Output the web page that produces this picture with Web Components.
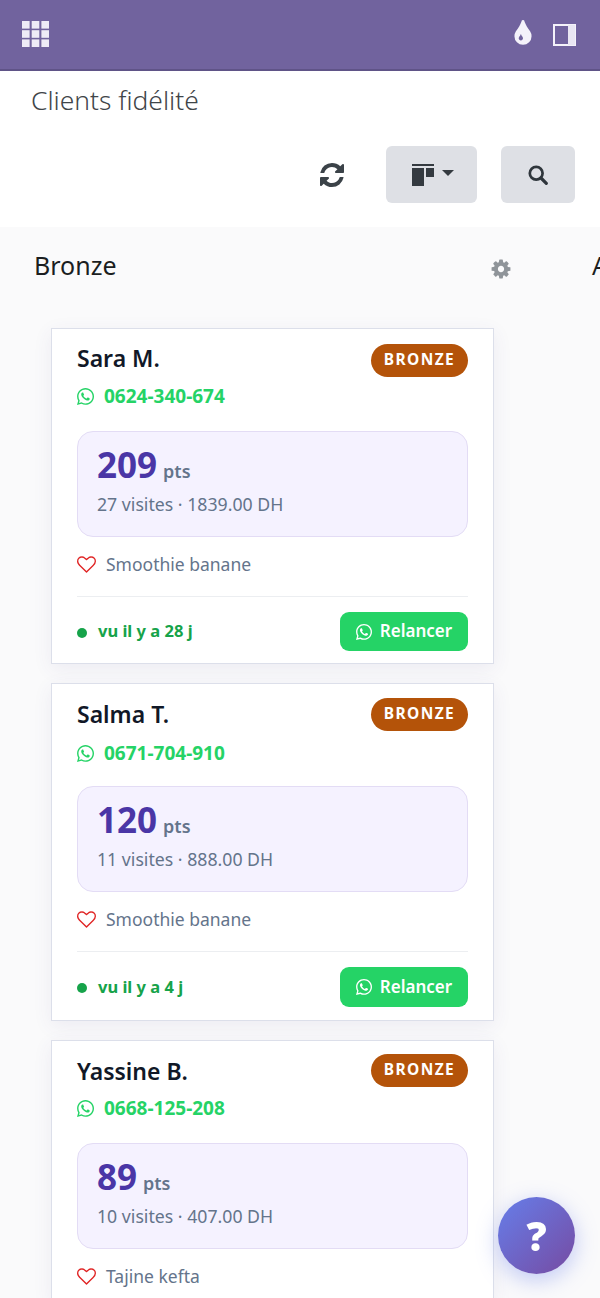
<!DOCTYPE html>
<html lang="fr">
<head>
<meta charset="utf-8">
<title>Clients fidélité</title>
<style>
  html, body {
    margin: 0;
    height: 100%;
    overflow: hidden;
    background: #fff;
    font-family: "Noto Sans", "Open Sans", sans-serif;
    color: #212529;
  }
  body { display: flex; flex-direction: column; }
</style>
</head>
<body>
<app-navbar></app-navbar>
<control-panel title="Clients fidélité"></control-panel>
<kanban-board>
  <kanban-column title="Bronze" settings>
    <loyalty-card name="Sara M." phone="0624-340-674" points="209" visits="27 visites · 1839.00 DH" favorite="Smoothie banane" seen="vu il y a 28 j"></loyalty-card>
    <loyalty-card tall style="--badge-y:-1px;--name-y:1px;--phone-y:2px" name="Salma T." phone="0671-704-910" points="120" visits="11 visites · 888.00 DH" favorite="Smoothie banane" seen="vu il y a 4 j"></loyalty-card>
    <loyalty-card style="--badge-y:-2px;--name-y:1px" name="Yassine B." phone="0668-125-208" points="89" visits="10 visites · 407.00 DH" favorite="Tajine kefta"></loyalty-card>
  </kanban-column>
  <kanban-column title="Argent"></kanban-column>
</kanban-board>
<help-fab></help-fab>

<script>
// Icones partagees (viewBox 1792 sauf WhatsApp)
const ICONS = {
  refresh: "M1639 1056q0 5-1 7-64 268-268 434.5t-478 166.5q-146 0-282.5-55t-243.5-157l-129 129q-19 19-45 19t-45-19-19-45v-448q0-26 19-45t45-19h448q26 0 45 19t19 45-19 45l-137 137q71 66 161 102t187 36q134 0 250-65t186-179q11-17 53-117 8-23 30-23h192q13 0 22.5 9.5t9.5 22.5zm25-800v448q0 26-19 45t-45 19h-448q-26 0-45-19t-19-45 19-45l138-138q-148-137-349-137-134 0-250 65t-186 179q-11 17-53 117-8 23-30 23h-199q-13 0-22.5-9.5t-9.5-22.5v-7q65-268 270-434.5t480-166.5q146 0 284 55.5t245 156.5l130-129q19-19 45-19t45 19 19 45z",
  cog: "M1152 896q0-106-75-181t-181-75-181 75-75 181 75 181 181 75 181-75 75-181zm512-109v222q0 12-8 23t-20 13l-185 28q-19 54-39 91 35 50 107 138 10 12 10 25t-9 23q-27 37-99 108t-94 71q-12 0-26-9l-138-108q-44 23-91 38-16 136-29 186-7 28-36 28h-222q-14 0-24.5-8.5t-11.5-21.5l-28-184q-49-16-90-37l-141 107q-10 9-25 9-14 0-25-11-126-114-165-168-7-10-7-23 0-12 8-23 15-21 51-66.5t54-70.5q-27-50-41-99l-183-27q-13-2-21-12.5t-8-23.5v-222q0-12 8-23t19-13l186-28q14-46 39-92-40-57-107-138-10-12-10-24 0-10 9-23 26-36 98.5-107.5t94.5-71.5q13 0 26 10l138 107q44-23 91-38 16-136 29-186 7-28 36-28h222q14 0 24.5 8.5t11.5 21.5l28 184q49 16 90 37l142-107q9-9 24-9 13 0 25 10 129 119 165 170 7 8 7 22 0 12-8 23-15 21-51 66.5t-54 70.5q26 50 41 98l183 28q13 2 21 12.5t8 23.5z",
  tint: "M896 1152q0-36-20-69-1-1-15.5-22.5t-25.5-38-25-44-21-50.5q-4-16-21-16t-21 16q-7 23-21 50.5t-25 44-25.5 38-15.5 22.5q-20 33-20 69 0 53 37.5 90.5t90.5 37.5 90.5-37.5 37.5-90.5zm512-128q0 212-150 362t-362 150-362-150-150-362q0-145 81-275 6-9 62.5-90.5t101-151 99.5-178 83-201.5q9-30 34-47t51-17 51.5 17 33.5 47q28 93 83 201.5t99.5 178 101 151 62.5 90.5q81 127 81 275z",
  heart: "M1664 596q0-81-21.5-143t-55-98.5-81.5-59.5-94-31-98-8-112 25.5-110.5 64-86.5 72-60 61.5q-18 22-49 22t-49-22q-24-28-60-61.5t-86.5-72-110.5-64-112-25.5-98 8-94 31-81.5 59.5-55 98.5-21.5 143q0 168 187 355l581 560 580-559q188-188 188-356zm128 0q0 221-229 450l-623 600q-18 18-44 18t-44-18l-624-601q-10-8-27.5-26t-55.5-65.5-68-97.5-53.5-121-23.5-138q0-220 127-344t351-124q62 0 126.5 21.5t120 58 95.5 68.5 76 68q36-36 76-68t95.5-68.5 120-58 126.5-21.5q224 0 351 124t127 344z",
  whatsapp: "M380.9 97.1C339 55.1 283.2 32 223.9 32c-122.4 0-222 99.6-222 222 0 39.1 10.2 77.3 29.6 111L0 480l117.7-30.9c32.4 17.7 68.9 27 106.1 27h.1c122.3 0 224.1-99.6 224.1-222 0-59.3-25.2-115-67.1-157zm-157 341.6c-33.2 0-65.7-8.9-94-25.7l-6.7-4-69.8 18.3L72 359.2l-4.4-7c-18.5-29.4-28.2-63.3-28.2-98.2 0-101.7 82.8-184.5 184.6-184.5 49.3 0 95.6 19.2 130.4 54.1 34.8 34.9 56.2 81.2 56.1 130.5 0 101.8-84.9 184.6-186.6 184.6zm101.2-138.2c-5.5-2.8-32.8-16.2-37.9-18-5.1-1.9-8.8-2.8-12.5 2.8-3.7 5.6-14.3 18-17.6 21.8-3.2 3.7-6.5 4.2-12 1.4-32.6-16.3-54-29.1-75.5-66-5.7-9.8 5.7-9.1 16.3-30.3 1.8-3.7.9-6.9-.5-9.7-1.4-2.8-12.5-30.1-17.1-41.2-4.5-10.8-9.1-9.3-12.5-9.5-3.2-.2-6.9-.2-10.6-.2-3.7 0-9.7 1.4-14.8 6.9-5.1 5.6-19.4 19-19.4 46.3 0 27.3 19.9 53.7 22.6 57.4 2.8 3.7 39.1 59.7 94.8 83.8 35.2 15.2 49 16.5 66.6 13.9 10.7-1.6 32.8-13.4 37.4-26.4 4.6-13 4.6-24.1 3.2-26.4-1.3-2.5-5-3.9-10.5-6.6z"
};

const faIcon = (name, size, color) =>
  `<svg width="${size}" height="${size}" viewBox="0 0 1792 1792" fill="${color}" style="display:block;flex:none"><path d="${ICONS[name]}"/></svg>`;

const waIcon = (size, color) =>
  `<svg width="${size}" height="${size}" viewBox="0 32 448 448" fill="${color}" style="display:block;flex:none"><path d="${ICONS.whatsapp}"/></svg>`;

/** Barre de navigation violette */
class AppNavbar extends HTMLElement {
  constructor() {
    super();
    this.attachShadow({ mode: "open" });
  }

  connectedCallback() {
    this.shadowRoot.innerHTML = `
      <style>
        :host {
          display: flex;
          flex: none;
          box-sizing: border-box;
          height: 71px;
          align-items: center;
          justify-content: space-between;
          padding: 0 24px 0 22px;
          background: #71639e;
          border-bottom: 2px solid #5f5387;
        }
        .right { display: flex; align-items: center; gap: 15px; }
        .drop { margin-top: -1px; }
      </style>
      <svg width="27" height="26" viewBox="0 0 27 26" fill="#eeebf6" style="display:block;margin-top:-1px">
        <rect x="0" y="0" width="7.6" height="7.6"/><rect x="9.7" y="0" width="7.6" height="7.6"/><rect x="19.4" y="0" width="7.6" height="7.6"/>
        <rect x="0" y="9.2" width="7.6" height="7.6"/><rect x="9.7" y="9.2" width="7.6" height="7.6"/><rect x="19.4" y="9.2" width="7.6" height="7.6"/>
        <rect x="0" y="18.4" width="7.6" height="7.6"/><rect x="9.7" y="18.4" width="7.6" height="7.6"/><rect x="19.4" y="18.4" width="7.6" height="7.6"/>
      </svg>
      <div class="right">
        <span class="drop">${faIcon("tint", 30, "#f4f2fa")}</span>
        <svg width="23" height="22" viewBox="0 0 23 22" style="display:block">
          <rect x="1" y="1" width="21" height="20" fill="none" stroke="#f4f2fa" stroke-width="2"/>
          <rect x="15" y="1" width="7" height="20" fill="#e9e6f3"/>
        </svg>
      </div>
    `;
  }
}

/** Titre et boutons au dessus du kanban */
class ControlPanel extends HTMLElement {
  constructor() {
    super();
    this.attachShadow({ mode: "open" });
  }

  connectedCallback() {
    this.shadowRoot.innerHTML = `
      <style>
        :host {
          display: block;
          flex: none;
          box-sizing: border-box;
          height: 156px;
          padding: 13px 25px 0 31px;
          background: #fff;
        }
        h1 {
          margin: 0;
          font-size: 26.4px;
          line-height: 33px;
          font-weight: 300;
          color: #3f4549;
        }
        .actions {
          display: flex;
          align-items: center;
          justify-content: flex-end;
          margin-top: 29px;
          gap: 24px;
        }
        button {
          display: flex;
          align-items: center;
          justify-content: center;
          box-sizing: border-box;
          height: 57px;
          border: 0;
          border-radius: 6px;
          background: #dee0e5;
          padding: 0;
        }
        .refresh { width: 28px; background: none; margin-right: 16px; }
        .view { width: 91px; gap: 8px; padding-left: 2px; }
        .search { width: 74px; }
        .caret {
          border-top: 6px solid #343a40;
          border-left: 6px solid transparent;
          border-right: 6px solid transparent;
          margin-top: -3px;
        }
      </style>
      <h1>${this.getAttribute("title")}</h1>
      <div class="actions">
        <button class="refresh">${faIcon("refresh", 28, "#3b4248")}</button>
        <button class="view">
          <svg width="22" height="22" viewBox="0 0 22 22" fill="#343a40" style="display:block">
            <rect x="0" y="0" width="22" height="2"/>
            <rect x="0" y="4" width="12" height="18"/>
            <rect x="14" y="4" width="8" height="9"/>
          </svg>
          <span class="caret"></span>
        </button>
        <button class="search">
          <svg width="20" height="20" viewBox="0 0 20 20" fill="none" stroke="#2f363c" style="display:block">
            <circle cx="8.2" cy="8.2" r="6.4" stroke-width="2.7"/>
            <line x1="13" y1="13" x2="18.3" y2="18.3" stroke-width="3.2" stroke-linecap="round"/>
          </svg>
        </button>
      </div>
    `;
  }
}

/** Zone de colonnes, coupee a droite */
class KanbanBoard extends HTMLElement {
  constructor() {
    super();
    this.attachShadow({ mode: "open" });
  }

  connectedCallback() {
    this.shadowRoot.innerHTML = `
      <style>
        :host {
          display: flex;
          flex: 1;
          min-height: 0;
          overflow: hidden;
          gap: 15px;
          padding-left: 8px;
          background: #fafafb;
        }
      </style>
      <slot></slot>
    `;
  }
}

/** Colonne du kanban */
class KanbanColumn extends HTMLElement {
  constructor() {
    super();
    this.attachShadow({ mode: "open" });
  }

  connectedCallback() {
    const gear = this.hasAttribute("settings") ? faIcon("cog", 22, "#8f9499") : "";
    this.shadowRoot.innerHTML = `
      <style>
        :host {
          display: block;
          flex: none;
          box-sizing: border-box;
          width: 543px;
        }
        header {
          display: flex;
          align-items: center;
          justify-content: space-between;
          height: 33px;
          margin-top: 21px;
          padding: 0 39px 0 26px;
        }
        h2 {
          margin: 0;
          font-size: 25px;
          font-weight: 400;
          color: #1b1e21;
          white-space: nowrap;
        }
        .gear { margin-top: 9px; }
        .cards {
          display: flex;
          flex-direction: column;
          gap: 19px;
          margin-top: 47px;
          padding-left: 43px;
          width: 443px;
        }
      </style>
      <header><h2>${this.getAttribute("title")}</h2><span class="gear">${gear}</span></header>
      <div class="cards"><slot></slot></div>
    `;
  }
}

/** Carte client fidelite */
class LoyaltyCard extends HTMLElement {
  constructor() {
    super();
    this.attachShadow({ mode: "open" });
  }

  connectedCallback() {
    const attr = (name) => this.getAttribute(name);
    // Le bas de carte n'existe que si la derniere visite est connue
    const footer = attr("seen") ? `
      <hr>
      <div class="bottom">
        <div class="seen"><span class="dot"></span><span class="when">${attr("seen")}</span></div>
        <div class="relancer">${waIcon(16, "#fff")}<span class="label">Relancer</span></div>
      </div>` : "";
    this.shadowRoot.innerHTML = `
      <style>
        :host {
          display: block;
          box-sizing: border-box;
          width: 443px;
          padding: 15px 25px 12px;
          background: #fff;
          border: 1px solid #dcdfea;
          box-shadow: 0 5px 18px rgba(80, 70, 140, .08);
        }
        :host([tall]) { padding-bottom: 13px; }
        .top { display: flex; align-items: flex-start; justify-content: space-between; height: 33px; }
        .name {
          font-size: 23px;
          line-height: 29px;
          font-weight: 600;
          color: #111827;
          margin-top: var(--name-y, 0);
        }
        .badge {
          box-sizing: border-box;
          height: 33px;
          width: 97px;
          border-radius: 17px;
          background: #b45309;
          color: #fff;
          font-size: 15.5px;
          font-weight: 700;
          letter-spacing: 1.4px;
          line-height: 31px;
          text-align: center;
          margin-top: var(--badge-y, 0);
        }
        .phone {
          display: flex;
          align-items: center;
          gap: 10px;
          margin-top: calc(2px + var(--phone-y, 0px));
          margin-bottom: calc(0px - var(--phone-y, 0px));
          height: 34px;
          color: #25d366;
          font-size: 19px;
          font-weight: 700;
        }
        .stats {
          box-sizing: border-box;
          height: 106px;
          margin-top: 18px;
          padding: 10px 19px 0;
          background: #f5f2ff;
          border: 1px solid #e3dcf5;
          border-radius: 16px;
        }
        .points { font-size: 35px; line-height: 46px; font-weight: 700; color: #4a36a6; }
        .pts { font-size: 18px; font-weight: 600; color: #64748b; margin-left: 6px; }
        .visits { font-size: 17.7px; line-height: 24px; margin-top: -2px; color: #64748b; }
        .fav {
          display: flex;
          align-items: center;
          gap: 10px;
          height: 24px;
          margin-top: 15px;
          color: #64748b;
          font-size: 17.5px;
        }
        hr { border: 0; height: 1px; background: #eceef1; margin: 20px 0 15px; }
        .bottom { display: flex; align-items: center; justify-content: space-between; }
        .seen {
          display: flex;
          align-items: center;
          gap: 11px;
          color: #16a34a;
          font-size: 16.5px;
          font-weight: 700;
        }
        .when { margin-top: -2px; }
        .dot { width: 10px; height: 10px; border-radius: 50%; background: #16a34a; margin-top: 2px; }
        .relancer {
          display: flex;
          align-items: center;
          justify-content: center;
          gap: 8px;
          box-sizing: border-box;
          width: 128px;
          height: 39px;
          border-radius: 9px;
          background: #25d366;
          color: #fff;
          font-size: 17px;
          font-weight: 600;
        }
        .label { margin-top: -2px; }
        :host([tall]) .relancer { height: 40px; }
      </style>
      <div class="top">
        <span class="name">${attr("name")}</span>
        <span class="badge">BRONZE</span>
      </div>
      <div class="phone">${waIcon(17, "#25d366")}<span>${attr("phone")}</span></div>
      <div class="stats">
        <div class="points">${attr("points")}<span class="pts">pts</span></div>
        <div class="visits">${attr("visits")}</div>
      </div>
      <div class="fav">${faIcon("heart", 19, "#e02424")}<span>${attr("favorite")}</span></div>
      ${footer}
    `;
  }
}

/** Bouton d'aide flottant */
class HelpFab extends HTMLElement {
  constructor() {
    super();
    this.attachShadow({ mode: "open" });
  }

  connectedCallback() {
    this.shadowRoot.innerHTML = `
      <style>
        :host {
          position: fixed;
          right: 25px;
          bottom: 24px;
          width: 77px;
          height: 77px;
          display: flex;
          align-items: center;
          justify-content: center;
          border-radius: 50%;
          background: linear-gradient(135deg, #667eea, #764ba2);
          box-shadow: 0 6px 22px rgba(102, 126, 234, .4);
          color: #fff;
          font-size: 40px;
          font-weight: 900;
        }
      </style>
      <span>?</span>
    `;
  }
}

customElements.define("app-navbar", AppNavbar);
customElements.define("control-panel", ControlPanel);
customElements.define("kanban-board", KanbanBoard);
customElements.define("kanban-column", KanbanColumn);
customElements.define("loyalty-card", LoyaltyCard);
customElements.define("help-fab", HelpFab);
</script>
</body>
</html>
